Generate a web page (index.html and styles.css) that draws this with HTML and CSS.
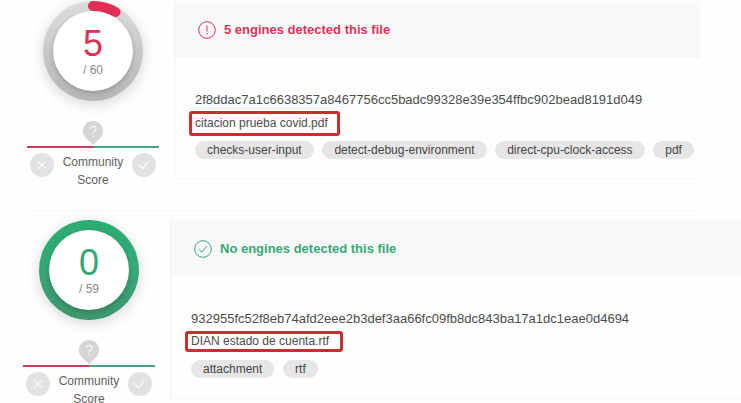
FILE: index.html
```html
<!DOCTYPE html>
<html lang="en">
<head>
<meta charset="utf-8">
<title>File detection reports</title>
<link rel="stylesheet" href="styles.css">
</head>
<body>
<section class="report detected">
  <aside class="score">
    <div class="ring">
      <svg class="arc" viewBox="0 0 100 100"><path d="M50 5A45 45 0 0 1 72.5 11"/></svg>
      <div class="dial"><span class="count">5</span><span class="total">/ 60</span></div>
    </div>
    <svg class="pin" viewBox="0 0 20 25"><path class="drop" d="M10 0a10 10 0 0 1 7.2 17L10 24 2.8 17A10 10 0 0 1 10 0z"/><path class="mark" d="M7.3 8q.2-2.7 2.9-2.7T13 8q0 1.5-1.6 2.3-1.3.7-1.2 2.4M10.2 14.5v1.5"/></svg>
    <div class="scale"></div>
    <div class="community">
      <svg class="vote" viewBox="0 0 24 24"><circle cx="12" cy="12" r="12"/><path d="M8 8l8 8M16 8l-8 8"/></svg>
      <span class="label">Community<br>Score</span>
      <svg class="vote" viewBox="0 0 24 24"><circle cx="12" cy="12" r="12"/><path d="M7 11.5l3.5 4.5L16.5 8"/></svg>
    </div>
  </aside>
  <main class="panel">
    <header class="verdict">
      <svg class="status" viewBox="0 0 18 18"><circle cx="9" cy="9" r="8.3"/><path d="M9 4.5v6M9 12v1.5"/></svg>
      <strong>5 engines detected this file</strong>
    </header>
    <div class="details">
      <div class="hash">2f8ddac7a1c6638357a8467756cc5badc99328e39e354ffbc902bead8191d049</div>
      <div class="filename">citacion prueba covid.pdf</div>
      <div class="tags"><span>checks-user-input</span><span>detect-debug-environment</span><span>direct-cpu-clock-access</span><span>pdf</span></div>
    </div>
  </main>
</section>
<hr class="divider">
<section class="report clean">
  <aside class="score">
    <div class="ring">
      <div class="dial"><span class="count">0</span><span class="total">/ 59</span></div>
    </div>
    <svg class="pin" viewBox="0 0 20 25"><path class="drop" d="M10 0a10 10 0 0 1 7.2 17L10 24 2.8 17A10 10 0 0 1 10 0z"/><path class="mark" d="M7.3 8q.2-2.7 2.9-2.7T13 8q0 1.5-1.6 2.3-1.3.7-1.2 2.4M10.2 14.5v1.5"/></svg>
    <div class="scale"></div>
    <div class="community">
      <svg class="vote" viewBox="0 0 24 24"><circle cx="12" cy="12" r="12"/><path d="M8 8l8 8M16 8l-8 8"/></svg>
      <span class="label">Community<br>Score</span>
      <svg class="vote" viewBox="0 0 24 24"><circle cx="12" cy="12" r="12"/><path d="M7 11.5l3.5 4.5L16.5 8"/></svg>
    </div>
  </aside>
  <main class="panel">
    <header class="verdict">
      <svg class="status" viewBox="0 0 18 18"><circle cx="9" cy="9" r="8.3"/><path d="M5 9.3l2.8 2.9L13 6"/></svg>
      <strong>No engines detected this file</strong>
    </header>
    <div class="details">
      <div class="hash">932955fc52f8eb74afd2eee2b3def3aa66fc09fb8dc843ba17a1dc1eae0d4694</div>
      <div class="filename">DIAN estado de cuenta.rtf</div>
      <div class="tags"><span>attachment</span><span>rtf</span></div>
    </div>
  </main>
</section>
</body>
</html>
```
FILE: styles.css
```css
* { box-sizing: border-box; }
body {
  margin: 0;
  height: 403px;
  overflow: hidden;
  background: #fefefe;
  color: #4c4c4c;
  font: 12px/18px "Liberation Sans", Arial, sans-serif;
}
svg { display: block; flex: none; }
.report { display: flex; align-items: flex-start; gap: 15px; }
.detected { height: 210px; padding: 1px 41px 0 27px; --tone: #d9345b; }
.clean { height: 192px; padding: 9px 0 0 23px; --tone: #36a877; }
.divider { height: 1px; margin: 0 41px 0 27px; border: 0; background: #f6f6f6; }
.score { width: 132px; flex: none; display: flex; flex-direction: column; align-items: center; }
.ring {
  position: relative;
  width: 100px;
  height: 100px;
  padding: 10px;
  border-radius: 50%;
  box-shadow: 0 3px 14px rgba(0, 0, 0, .16);
}
.detected .ring { background: linear-gradient(#dedede, #c8c8c8 50%, #b5b5b5); }
.clean .ring { background: linear-gradient(#2bad72, #36a877 50%, #3f956d); }
.arc { position: absolute; inset: 0; fill: none; stroke: #e32d57; stroke-width: 10; stroke-linecap: round; }
.dial {
  height: 80px;
  border-radius: 50%;
  background: #fff;
  display: flex;
  flex-direction: column;
  align-items: center;
  box-shadow: 0 2px 5px rgba(0, 0, 0, .2);
}
.count { margin-top: 12px; font-size: 36px; line-height: 42px; height: 39px; color: var(--tone); }
.total { color: #888; line-height: 16px; }
.pin { width: 20px; height: 25px; margin-top: 20px; }
.drop { fill: #d5d5d5; }
.mark { fill: none; stroke: #f7f7f7; stroke-width: 1.2; }
.scale { width: 132px; height: 2px; background: linear-gradient(90deg, #c63f60 50%, #48a57d 50%); }
.community { width: 126px; display: flex; justify-content: space-between; margin: 5px 0 0; }
.vote { width: 24px; height: 24px; fill: #e2e2e2; }
.vote path { fill: none; stroke: #fafafa; stroke-width: 1.3; }
.label { text-align: center; color: #606060; }
.panel { flex: 1; min-width: 0; border-left: 1px solid #f3f3f3; border-bottom: 1px solid #f7f7f7; }
.detected .panel { height: 178px; }
.clean .panel { height: 179px; }
.verdict {
  height: 57px;
  padding: 0 0 0 23px;
  background: #f8f8f8;
  display: flex;
  align-items: center;
  gap: 8px;
  color: var(--tone);
  font-size: 13px;
}
.status { width: 18px; height: 18px; fill: none; stroke: currentColor; stroke-width: 1; }
.details { padding: 33px 0 0 20px; }
.hash { font-size: 13px; white-space: nowrap; }
.filename {
  width: 151px;
  height: 25px;
  margin: 2px 0 5px -6px;
  padding-left: 3px;
  border: 3px solid #c9302c;
  border-radius: 3px;
  line-height: 19px;
  white-space: nowrap;
}
.tags { display: flex; gap: 8.7px; }
.tags span { height: 18px; padding: 0 12px; border-radius: 9px; background: #e6e6e6; color: #444; }
.clean .filename { width: 158px; height: 21px; line-height: 15px; margin-top: 3px; margin-bottom: 8px; }
```
